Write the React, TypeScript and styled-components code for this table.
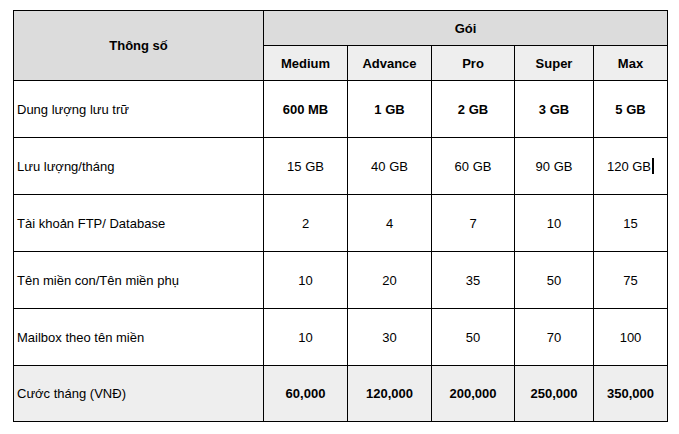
import React from "react";
import styled, { createGlobalStyle } from "styled-components";

const GlobalStyle = createGlobalStyle`
  html, body {
    margin: 0;
    padding: 0;
    background: #ffffff;
  }
  body {
    font-family: "Liberation Sans", Arial, sans-serif;
    color: #000;
  }
`;

const Page = styled.div`
  padding: 10px 0 0 13px;
`;

const Table = styled.table`
  border-collapse: collapse;
  table-layout: fixed;
  width: 654px;
  font-size: 13px;
  border: 1px solid #000;
`;

const HeadCell = styled.th<{ $tone: "dark" | "light" }>`
  border: 1px solid #000;
  background: ${(p) => (p.$tone === "dark" ? "#dcdcdc" : "#eeeeee")};
  font-weight: bold;
  text-align: center;
  height: 34px;
  padding: 0;
`;

const Row = styled.tr<{ $shaded?: boolean }>`
  height: 57px;
  background: ${(p) => (p.$shaded ? "#eeeeee" : "#ffffff")};
`;

const LabelCell = styled.td`
  border: 1px solid #000;
  padding: 0 0 0 3px;
  text-align: left;
`;

const ValueCell = styled.td<{ $bold?: boolean }>`
  border: 1px solid #000;
  text-align: center;
  padding: 0;
  font-weight: ${(p) => (p.$bold ? "bold" : "normal")};
`;

const Caret = styled.span`
  display: inline-block;
  width: 2px;
  height: 16px;
  background: #000;
  vertical-align: -3px;
  margin-left: 1px;
`;

const plans = ["Medium", "Advance", "Pro", "Super", "Max"];
const colWidths = [250, 84, 84, 83, 79, 74];

const rows: { label: string; values: string[]; bold?: boolean; shaded?: boolean; caret?: boolean }[] = [
  { label: "Dung lượng lưu trữ", values: ["600 MB", "1 GB", "2 GB", "3 GB", "5 GB"], bold: true },
  { label: "Lưu lượng/tháng", values: ["15 GB", "40 GB", "60 GB", "90 GB", "120 GB"], caret: true },
  { label: "Tài khoản FTP/ Database", values: ["2", "4", "7", "10", "15"] },
  { label: "Tên miền con/Tên miền phụ", values: ["10", "20", "35", "50", "75"] },
  { label: "Mailbox theo tên miền", values: ["10", "30", "50", "70", "100"] },
  {
    label: "Cước tháng (VNĐ)",
    values: ["60,000", "120,000", "200,000", "250,000", "350,000"],
    bold: true,
    shaded: true,
  },
];

export default function App() {
  return (
    <Page>
      <GlobalStyle />
      <Table>
        <colgroup>
          {colWidths.map((w, i) => (
            <col key={i} style={{ width: w }} />
          ))}
        </colgroup>
        <thead>
          <tr>
            <HeadCell $tone="dark" rowSpan={2}>
              Thông số
            </HeadCell>
            <HeadCell $tone="dark" colSpan={5}>
              Gói
            </HeadCell>
          </tr>
          <tr>
            {plans.map((p) => (
              <HeadCell key={p} $tone="light">
                {p}
              </HeadCell>
            ))}
          </tr>
        </thead>
        <tbody>
          {rows.map((r, ri) => (
            <Row key={r.label} $shaded={r.shaded} style={ri === rows.length - 1 ? { height: 56 } : undefined}>
              <LabelCell>{r.label}</LabelCell>
              {r.values.map((v, i) => (
                <ValueCell key={i} $bold={r.bold}>
                  {v}
                  {r.caret && i === r.values.length - 1 && <Caret />}
                </ValueCell>
              ))}
            </Row>
          ))}
        </tbody>
      </Table>
    </Page>
  );
}
